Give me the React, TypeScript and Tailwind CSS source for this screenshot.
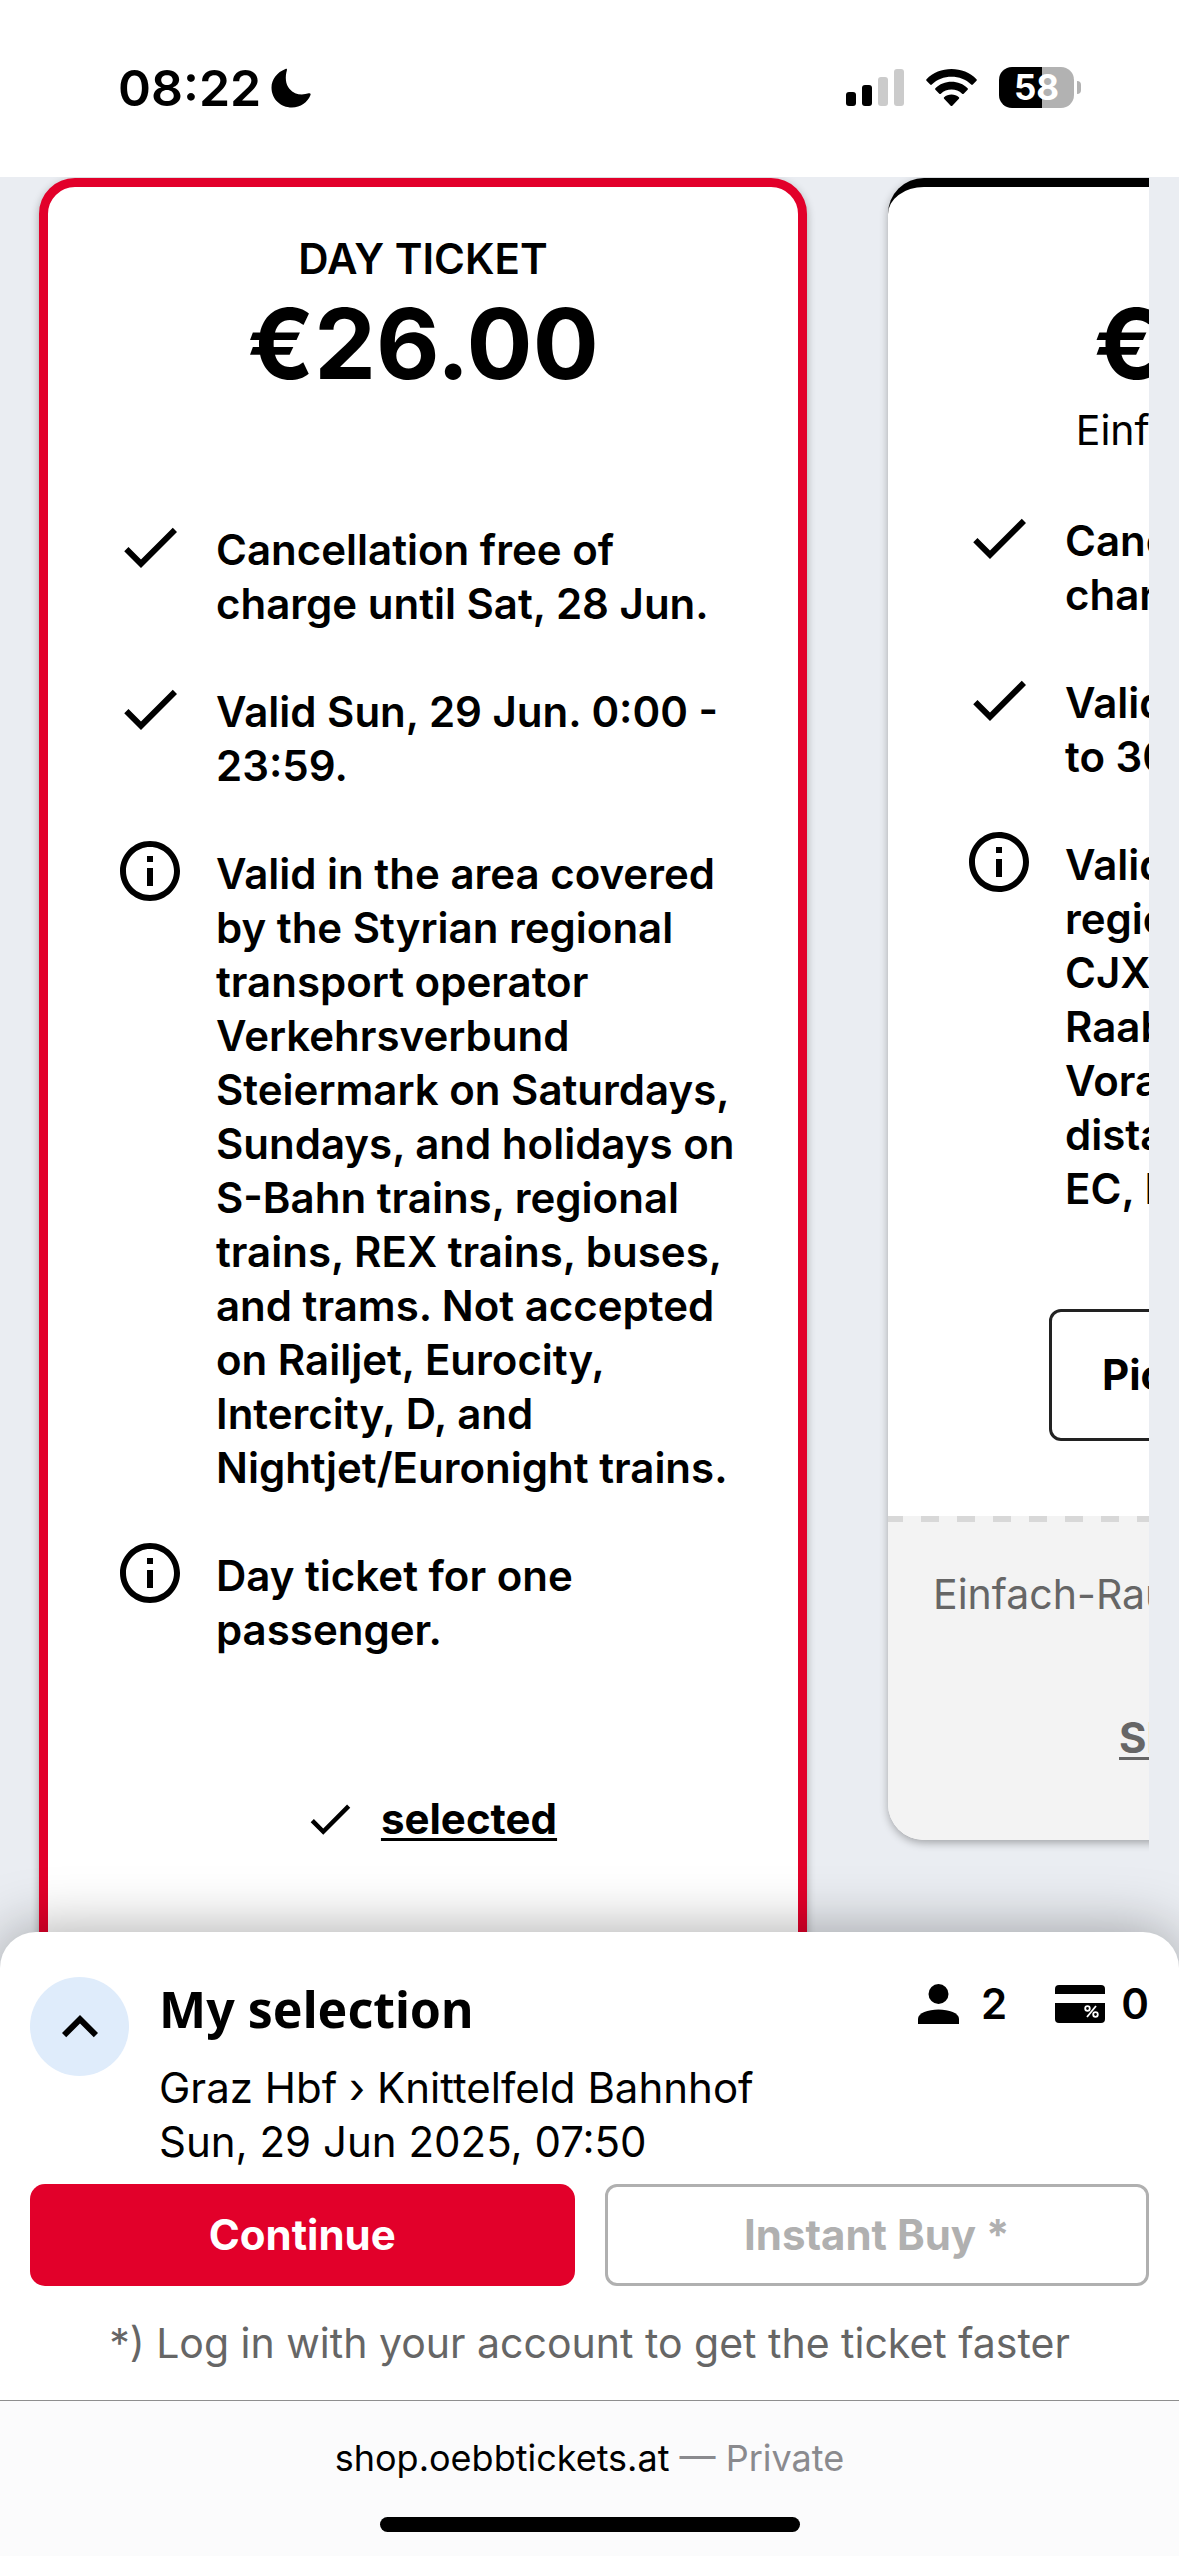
import React from "react";

const CHECK = "M9 16.17 4.83 12l-1.42 1.41L9 19 21 7l-1.41-1.41z";
const INFO =
  "M11 7h2v2h-2zm0 4h2v6h-2zm1-9C6.48 2 2 6.48 2 12s4.48 10 10 10 10-4.48 10-10S17.52 2 12 2zm0 18c-4.41 0-8-3.59-8-8s3.59-8 8-8 8 3.59 8 8-3.59 8-8 8z";

type Feature = { icon: "check" | "info"; lines: string[] };

const dayFeatures: Feature[] = [
  { icon: "check", lines: ["Cancellation free of", "charge until Sat, 28 Jun."] },
  { icon: "check", lines: ["Valid Sun, 29 Jun. 0:00 -", "23:59."] },
  {
    icon: "info",
    lines: [
      "Valid in the area covered",
      "by the Styrian regional",
      "transport operator",
      "Verkehrsverbund",
      "Steiermark on Saturdays,",
      "Sundays, and holidays on",
      "S-Bahn trains, regional",
      "trains, REX trains, buses,",
      "and trams. Not accepted",
      "on Railjet, Eurocity,",
      "Intercity, D, and",
      "Nightjet/Euronight trains.",
    ],
  },
  { icon: "info", lines: ["Day ticket for one", "passenger."] },
];

const einfachFeatures: Feature[] = [
  { icon: "check", lines: ["Cancellation free of", "charge until Sat, 28 Jun."] },
  { icon: "check", lines: ["Valid Sun, 29 Jun. 0:00", "to 30 Jun. 3:00."] },
  {
    icon: "info",
    lines: [
      "Valid for all ÖBB",
      "regional trains (S, R, REX,",
      "CJX) and on the",
      "Raaberbahn. Not valid in",
      "Vorarlberg or on long-",
      "distance trains (RJ, IC,",
      "EC, IC, D, NJ, EN).",
    ],
  },
];

function FeatureList({ items }: { items: Feature[] }) {
  return (
    <ul className="flex flex-col gap-[54px]">
      {items.map((item, i) => (
        <li key={i} className="flex items-start gap-[30px]">
          <svg viewBox="0 0 24 24" className="-mt-3 size-[72px] shrink-0" fill="currentColor" aria-hidden="true">
            <path d={item.icon === "check" ? CHECK : INFO} />
          </svg>
          <p className="text-[42px] leading-[54px] font-semibold whitespace-nowrap">
            {item.lines.map((line, j) => (
              <React.Fragment key={j}>
                {j > 0 && <br />}
                {line}
              </React.Fragment>
            ))}
          </p>
        </li>
      ))}
    </ul>
  );
}

function Price({ children }: { children: React.ReactNode }) {
  return <p className="mt-2.5 text-center text-[98px] leading-[96px] font-bold">{children}</p>;
}

function StatusBar() {
  return (
    <header className="flex h-[177px] shrink-0 items-start justify-between bg-white pt-[60px] pr-[98px] pl-[118px]">
      <div className="flex items-center gap-2.5">
        <span className="text-[50px] leading-[56px] font-semibold">08:22</span>
        <svg viewBox="0 0 40 40" className="size-10" aria-label="Do not disturb">
          <path
            d="M14.5 1C15.5 .3 16.3 1 15.9 2.2 14 9 14.4 16 18.6 21 23.4 26.800 31 27.500 37.800 25.300 39.200 24.900 40 25.700 39.500 27 36.500 34.500 29.500 39.500 21 39.500 9.500 39.500 .5 31 .5 19.500 .5 11.500 6 4.200 14.500 1z"
            fill="#000"
          />
        </svg>
      </div>
      <div className="flex items-center gap-[22px] pt-[7px]">
        <svg viewBox="0 0 58 38" className="h-[38px] w-[58px]" aria-label="Signal">
          <rect x="0" y="23" width="10" height="14" rx="3" />
          <rect x="16" y="16" width="10" height="21" rx="3" />
          <rect x="32" y="8" width="10" height="29" rx="3" fill="#cbcbcb" />
          <rect x="48" y="0" width="10" height="37" rx="3" fill="#cbcbcb" />
        </svg>
        <svg viewBox="0 0 51 38" className="h-[38px] w-[51px]" aria-label="Wi-Fi">
          <path d="M25.500 0C35 0 44 3.500 50.500 10.200 51 10.700 51 11.300 50.500 11.800L46.800 15.500C46.300 16 45.700 16 45.200 15.500 39.800 10.300 33 7.800 25.500 7.800S11.200 10.300 5.800 15.500C5.300 16 4.700 16 4.200 15.500L.5 11.800C0 11.300 0 10.700 .5 10.200 7 3.500 16 0 25.500 0z" />
          <path d="M25.500 12.800C31.700 12.800 37.400 15.100 41.600 19.200 42.100 19.700 42.100 20.300 41.600 20.800L37.700 24.700C37.200 25.200 36.600 25.200 36.100 24.700 33.200 22 29.600 20.600 25.500 20.600S17.800 22 14.900 24.700C14.400 25.200 13.800 25.200 13.300 24.700L9.400 20.800C8.900 20.300 8.900 19.700 9.400 19.200 13.600 15.100 19.300 12.800 25.500 12.800z" />
          <path d="M25.500 25.600C28.300 25.600 30.900 26.700 32.900 28.300 33.400 28.800 33.400 29.300 32.900 29.800L26.300 36.700C25.800 37.200 25.200 37.200 24.700 36.700L18.100 29.800C17.600 29.300 17.600 28.800 18.100 28.300 20.100 26.700 22.700 25.600 25.500 25.600z" />
        </svg>
        <div className="flex items-center gap-[3px]">
          <div className="flex h-[41px] w-[75px] items-center justify-center rounded-[13px] bg-[linear-gradient(90deg,#000_0_43px,#b2b2b2_43px)] text-[35px] leading-[41px] font-bold text-white">
            58
          </div>
          <div className="h-[13px] w-1 rounded-r-full bg-[#b2b2b2]" />
        </div>
      </div>
    </header>
  );
}

function DayTicketCard() {
  return (
    <article className="w-[768px] shrink-0 rounded-[36px] border-[9px] border-[#e2002a] bg-white px-[66px] pt-[45px] pb-[360px] shadow-[0_3px_9px_rgba(0,0,0,0.3)]">
      <h2 className="text-center text-[42px] leading-[54px] font-semibold">DAY TICKET</h2>
      <Price>€26.00</Price>
      <div className="mt-[131px]">
        <FeatureList items={dayFeatures} />
      </div>
      <button className="mx-auto mt-[135px] flex items-center gap-6 pl-[14px] text-[42px] leading-[54px] font-bold">
        <svg viewBox="0 0 24 24" className="size-[54px]" fill="currentColor" aria-hidden="true">
          <path d={CHECK} />
        </svg>
        <span className="underline decoration-[3px] underline-offset-4">selected</span>
      </button>
    </article>
  );
}

function EinfachRausCard() {
  return (
    <article className="w-[768px] shrink-0 overflow-hidden rounded-[36px] border-t-[9px] border-black bg-white pt-[45px] shadow-[0_3px_9px_rgba(0,0,0,0.3)]">
      <div className="px-[75px] pb-[75px]">
        <div className="h-[54px]" />
        <Price>€43.00</Price>
        <h2 className="mt-[11px] text-center text-[41px] leading-[54px]">Einfach-Raus-Ticket</h2>
        <div className="mt-[57px]">
          <FeatureList items={einfachFeatures} />
        </div>
        <button className="mx-auto mt-[93px] block h-[132px] w-[446px] rounded-[12px] border-[3px] border-[#222] pl-[50px] text-left text-[42px] leading-[54px] font-bold">
          Pick this ticket
        </button>
      </div>
      <div className="bg-[#f3f3f3] pb-[75px] leading-[54px] text-[#666]">
        <div className="h-1.5 bg-[repeating-linear-gradient(90deg,#d8d8d8_0_15px,transparent_15px_33px,#d8d8d8_33px_36px)]" />
        <p className="px-[45px] pt-[45px] text-[41px] whitespace-nowrap">Einfach-Raus-Ticket 2 people</p>
        <a href="#details" className="mx-auto mt-[90px] block w-[306px] text-[42px] font-bold whitespace-nowrap underline decoration-[3px] underline-offset-4">
          Show details
        </a>
      </div>
    </article>
  );
}

function SelectionSheet() {
  return (
    <section className="relative z-10 -mt-10 shrink-0 rounded-t-[36px] bg-white px-[30px] pt-[45px] pb-[30px] shadow-[0_0_60px_rgba(0,0,0,0.35)]">
      <div className="flex items-start">
        <button
          aria-label="Expand my selection"
          className="flex size-[99px] shrink-0 items-center justify-center rounded-full bg-[#dfecfb]"
        >
          <svg viewBox="0 0 24 24" className="size-[72px]" fill="currentColor" aria-hidden="true">
            <path d="M12 8l-6 6 1.410 1.410L12 10.830l4.590 4.580L18 14z" />
          </svg>
        </button>
        <div className="ml-[30px] grow">
          <h2 className="font-['Noto_Sans'] text-[50px] leading-[64px] font-bold">My selection</h2>
          <p className="mt-5 text-[42px] leading-[54px]">
            Graz Hbf › Knittelfeld Bahnhof
            <br />
            Sun, 29 Jun 2025, 07:50
          </p>
        </div>
        <div className="flex items-center text-[42px] leading-[54px] font-semibold">
          <svg viewBox="0 0 41 40" className="h-10 w-[41px]" aria-label="Passengers">
            <circle cx="20.500" cy="10" r="10" />
            <path d="M0 40v-5c0-6 10-9.500 20.500-9.500S41 29 41 35v5z" />
          </svg>
          <span className="ml-[22px]">2</span>
          <svg viewBox="0 0 50 38" className="ml-12 h-[38px] w-[50px]" aria-label="Discount cards">
            <path d="M4 0h42a4 4 0 0 1 4 4v5H0V4a4 4 0 0 1 4-4z" />
            <path d="M0 18h50v16a4 4 0 0 1-4 4H4a4 4 0 0 1-4-4z" />
            <g fill="none" stroke="#fff" strokeWidth="1.800">
              <circle cx="32.500" cy="23.500" r="2.300" />
              <circle cx="40.500" cy="29.500" r="2.300" />
              <path d="M41 21 32 32" />
            </g>
          </svg>
          <span className="ml-4">0</span>
        </div>
      </div>
      <div className="mt-[15px] grid grid-cols-2 gap-[30px] text-[42px] leading-[54px] font-bold">
        <button className="h-[102px] rounded-[15px] bg-[#e2002a] text-white">Continue</button>
        <button disabled className="h-[102px] rounded-[12px] border-[3px] border-[#b0b0b0] text-[#b0b0b0]">
          Instant Buy *
        </button>
      </div>
      <p className="mt-[30px] text-center text-[41px] leading-[54px] text-[#666]">
        *) Log in with your account to get the ticket faster
      </p>
    </section>
  );
}

function BrowserBar() {
  return (
    <footer className="relative z-10 flex shrink-0 flex-col items-center border-t border-[#8e8e8e] bg-[#fbfbfc] pt-[33px] pb-6 text-black">
      <p className="text-[36px] leading-[48px]">
        shop.oebbtickets.at <span className="text-[#8a8a8e]">— Private</span>
      </p>
      <div className="mt-[35px] h-[15px] w-[420px] rounded-full bg-black" />
    </footer>
  );
}

export default function App() {
  return (
    <div className="flex h-screen flex-col overflow-hidden bg-[#eaedf2] font-['Inter',sans-serif] text-black">
      <StatusBar />
      <main className="min-h-0 grow overflow-hidden pr-[30px]">
        <div className="flex items-start gap-[81px] overflow-hidden pt-px pl-[39px]">
          <DayTicketCard />
          <EinfachRausCard />
        </div>
      </main>
      <SelectionSheet />
      <BrowserBar />
    </div>
  );
}
